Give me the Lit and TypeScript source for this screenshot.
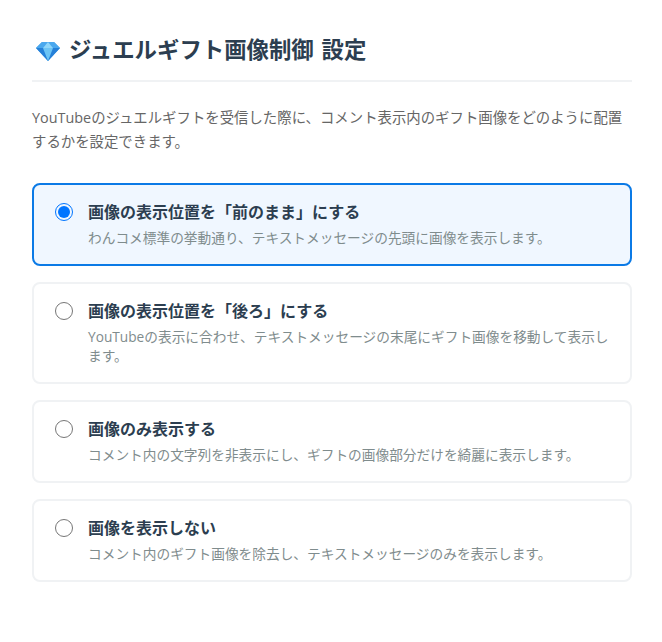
import { LitElement, html, css } from "lit";
import { customElement } from "lit/decorators.js";

const options = [
  { title: "画像の表示位置を「前のまま」にする", desc: "わんコメ標準の挙動通り、テキストメッセージの先頭に画像を表示します。", selected: true },
  { title: "画像の表示位置を「後ろ」にする", desc: "YouTubeの表示に合わせ、テキストメッセージの末尾にギフト画像を移動して表示します。", selected: false },
  { title: "画像のみ表示する", desc: "コメント内の文字列を非表示にし、ギフトの画像部分だけを綺麗に表示します。", selected: false },
  { title: "画像を表示しない", desc: "コメント内のギフト画像を除去し、テキストメッセージのみを表示します。", selected: false },
];

@customElement("app-root")
export class AppRoot extends LitElement {
  static styles = css`
    :host {
      display: block;
      background: #fff;
      min-height: 642px;
      box-sizing: border-box;
      padding: 32px 30px 0 32px;
      font-family: "Open Sans", "Noto Sans CJK JP", sans-serif;
    }
    .head {
      display: flex;
      align-items: center;
      gap: 9px;
      height: 36px;
      padding: 0 0 12px 0;
      border-bottom: 2px solid #f0f2f4;
    }
    .gem { width: 24px; height: 20px; flex: none; margin: 2px 0 0 4px; }
    h1 {
      margin: 0;
      font-size: 22.4px;
      line-height: 36px;
      font-weight: 700;
      word-spacing: 2px;
      color: #2c3e50;
    }
    .intro {
      margin: 24px 0 30px;
      font-size: 14.4px;
      line-height: 23.5px;
      color: #666;
    }
    .list { display: flex; flex-direction: column; gap: 16px; }
    .card {
      display: flex;
      gap: 15px;
      padding: 15px 21px 17px;
      border: 2px solid #f0f2f4;
      border-radius: 8px;
      background: #fff;
    }
    .card.on { border-color: #0b7ae6; background: #f0f7ff; }
    .radio {
      width: 16px;
      height: 16px;
      margin: 3px 0 0;
      border: 1px solid #767676;
      border-radius: 50%;
      flex: none;
      box-sizing: content-box;
      display: flex;
      align-items: center;
      justify-content: center;
    }
    .on .radio { border-color: #0075ff; }
    .on .radio::after {
      content: "";
      width: 12px;
      height: 12px;
      border-radius: 50%;
      background: #0075ff;
    }
    .title {
      font-size: 16px;
      line-height: 24px;
      font-weight: 700;
      color: #2c3e50;
    }
    .desc {
      margin-top: 4px;
      font-size: 13.7px;
      line-height: 19px;
      color: #7f8c8d;
    }
  `;

  render() {
    return html`
      <div class="head">
        <svg class="gem" viewBox="0 0 24 20">
          <polygon points="6,1 18,1 24,7 12,20 0,7" fill="#3f9be8" />
          <polygon points="0,7 24,7 12,20" fill="#2580d8" />
          <polygon points="7,7 17,7 12,20" fill="#6cc4f5" />
          <polygon points="6,1 12,1 7,7 0,7" fill="#4aa8ee" />
          <polygon points="12,1 18,1 24,7 17,7" fill="#4aa8ee" />
          <polygon points="12,1 17,7 7,7" fill="#8fd6fa" />
        </svg>
        <h1>ジュエルギフト画像制御 設定</h1>
      </div>
      <p class="intro">YouTubeのジュエルギフトを受信した際に、コメント表示内のギフト画像をどのように配置するかを設定できます。</p>
      <div class="list">
        ${options.map(
          (o) => html`
            <div class="card ${o.selected ? "on" : ""}">
              <span class="radio"></span>
              <div>
                <div class="title">${o.title}</div>
                <div class="desc">${o.desc}</div>
              </div>
            </div>
          `
        )}
      </div>
    `;
  }
}
